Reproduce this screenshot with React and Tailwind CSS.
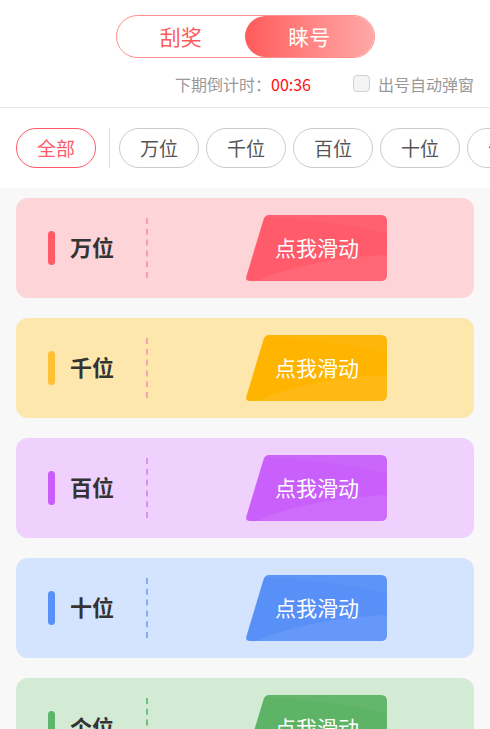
import React, { useState } from 'react';

const tabs = ['万位', '千位', '百位', '十位', '个位'];

const cards = [
  { name: '万位', card: 'bg-[#fdd4d8]', bar: 'bg-[#ff5a66]', line: 'border-[#f8a0aa]', btn: '#ff5b6b' },
  { name: '千位', card: 'bg-[#fee7ad]', bar: 'bg-[#fec035]', line: 'border-[#f5a4b0]', btn: '#ffb400' },
  { name: '百位', card: 'bg-[#f0d1fd]', bar: 'bg-[#c95cfb]', line: 'border-[#d892f2]', btn: '#c960fb' },
  { name: '十位', card: 'bg-[#d5e4fe]', bar: 'bg-[#5791f8]', line: 'border-[#88acf8]', btn: '#5890f8' },
  { name: '个位', card: 'bg-[#d3ebd5]', bar: 'bg-[#5cb568]', line: 'border-[#72c080]', btn: '#5db466' },
];

function SlideButton({ color }) {
  return (
    <div className="relative w-[142px] h-[66px] flex items-center justify-center">
      {/* slanted button shape */}
      <svg className="absolute inset-0" width="142" height="66" viewBox="0 0 142 66">
        <path d="M24 0 H136 Q142 0 142 6 V60 Q142 66 136 66 H5 Q0 66 1.5 61 L18.5 4.5 Q20 0 24 0 Z" fill={color} />
        <path d="M12 66 Q60 44 142 40 V60 Q142 66 136 66 Z" fill="#ffffff" opacity="0.08" />
        <path d="M24 0 H136 Q142 0 142 6 V18 Q90 6 20 2 Z" fill="#ffffff" opacity="0.04" />
      </svg>
      <span className="relative text-white text-[21px] pl-[2px]">点我滑动</span>
    </div>
  );
}

export default function App() {
  const [mode, setMode] = useState('account');
  const [active, setActive] = useState('全部');

  return (
    <div className="h-screen overflow-hidden bg-[#f8f8f8]" style={{ fontFamily: '"Noto Sans CJK SC", "Noto Sans", sans-serif' }}>
      {/* Header */}
      <div className="bg-white border-b border-[#e6e6e6]">
        <div className="flex justify-center pt-[15px]">
          <div className="flex w-[259px] h-[43px] rounded-full border border-[#ff8f8f]">
            <button
              className={`flex-1 rounded-full text-[21px] ${mode === 'prize' ? 'bg-gradient-to-r from-[#ff5a5a] to-[#ffa8a8] text-white' : 'text-[#ff5a5a]'}`}
              onClick={() => setMode('prize')}
            >
              刮奖
            </button>
            <button
              className={`flex-1 rounded-full text-[21px] ${mode === 'account' ? 'bg-gradient-to-r from-[#ff5a5a] to-[#ffa8a8] text-white' : 'text-[#ff5a5a]'}`}
              onClick={() => setMode('account')}
            >
              睐号
            </button>
          </div>
        </div>
        <div className="flex justify-end items-center gap-[42px] pr-4 h-[49px] pt-[2px]">
          <div className="text-[16px] text-[#999]">
            下期倒计时：<span className="text-[#ff1010]">00:36</span>
          </div>
          <label className="flex items-center gap-[8px] text-[16px] text-[#999]">
            <span className="w-[17px] h-[17px] rounded-[4px] border border-[#d0d0d0] bg-[#f4f4f4]" />
            出号自动弹窗
          </label>
        </div>
      </div>

      {/* Tabs */}
      <div className="bg-white h-[80px] flex items-center pl-4 overflow-hidden whitespace-nowrap">
        <button
          className={`shrink-0 w-[80px] h-[40px] rounded-full border text-[19px] ${active === '全部' ? 'border-[#ff5a6a] text-[#ff5a6a]' : 'border-[#cccccc] text-[#555]'}`}
          onClick={() => setActive('全部')}
        >
          全部
        </button>
        <div className="shrink-0 w-px h-[40px] bg-[#dddddd] ml-[13px] mr-[9px]" />
        <div className="flex gap-[7px]">
          {tabs.map((t) => (
            <button
              key={t}
              className={`shrink-0 w-[80px] h-[40px] rounded-full border text-[19px] ${active === t ? 'border-[#ff5a6a] text-[#ff5a6a]' : 'border-[#cccccc] text-[#555]'}`}
              onClick={() => setActive(t)}
            >
              {t}
            </button>
          ))}
        </div>
      </div>

      {/* Cards */}
      <div className="flex flex-col gap-5 px-4 pt-[10px]">
        {cards.map((c) => (
          <div key={c.name} className={`flex items-center h-[100px] rounded-[12px] pl-8 ${c.card}`}>
            <div className={`w-[7px] h-[34px] rounded-full ${c.bar}`} />
            <div className="w-[91px] pl-[15px] pb-[3px] text-[22px] font-bold text-[#333]">{c.name}</div>
            <div className={`h-[60px] border-l-2 border-dashed ${c.line}`} />
            <div className="ml-[97px]">
              <SlideButton color={c.btn} />
            </div>
          </div>
        ))}
      </div>
    </div>
  );
}
